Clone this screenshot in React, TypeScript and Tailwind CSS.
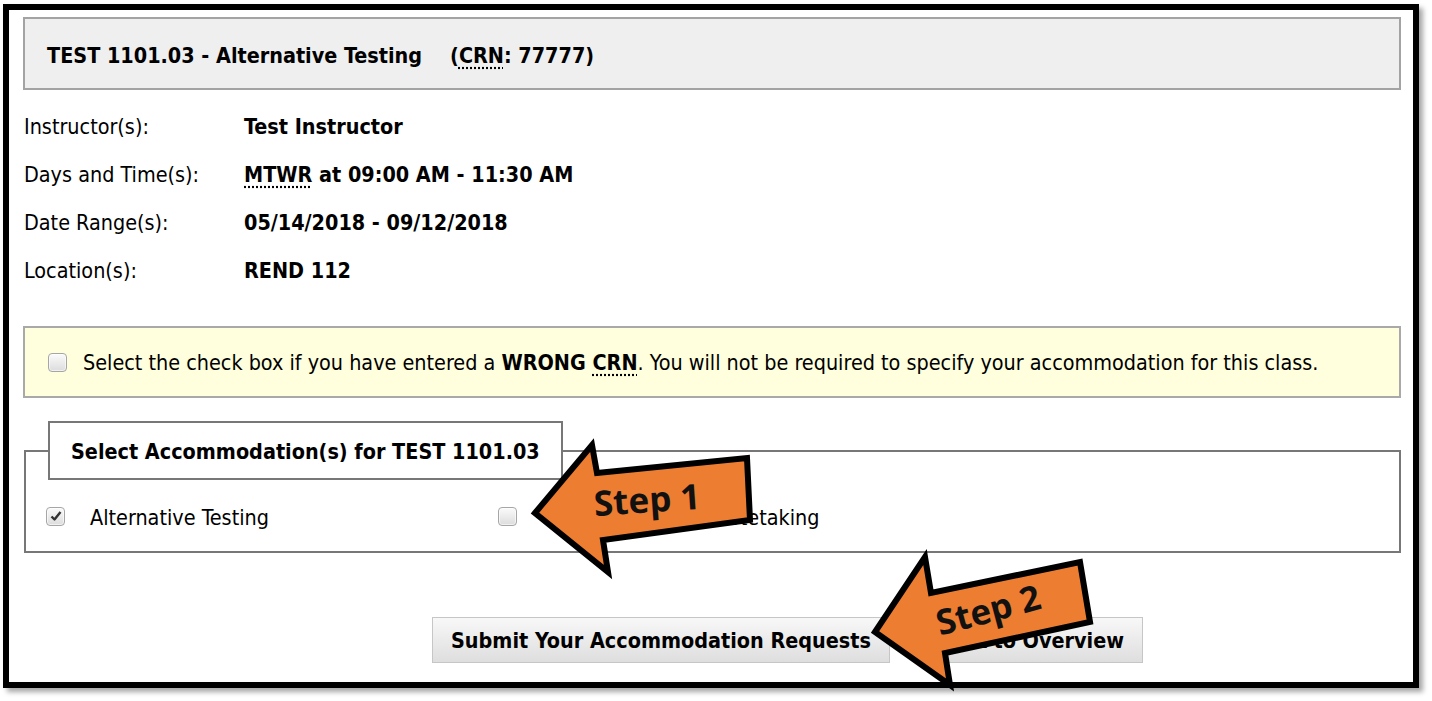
import React from "react";

const rows = [
  { label: "Instructor(s):", value: <>Test Instructor</> },
  {
    label: "Days and Time(s):",
    value: (
      <>
        <abbr className="underline decoration-dotted underline-offset-4">MTWR</abbr> at 09:00 AM - 11:30 AM
      </>
    ),
  },
  { label: "Date Range(s):", value: <>05/14/2018 - 09/12/2018</> },
  { label: "Location(s):", value: <>REND 112</> },
];

function Checkbox({ checked = false }: { checked?: boolean }) {
  return (
    <span className="flex h-[19px] w-[19px] shrink-0 items-center justify-center rounded-[4px] border border-[#a6a6a6] bg-gradient-to-b from-[#fbfbfb] to-[#dcdcdc] shadow-[inset_0_0_0_1px_rgba(255,255,255,0.6)]">
      {checked && (
        <svg width="12" height="12" viewBox="0 0 12 12">
          <path d="M1.5 6.5 L4.5 9.5 L10.5 2" fill="none" stroke="#333" strokeWidth="2.4" strokeLinejoin="round" />
        </svg>
      )}
    </span>
  );
}

export default function App() {
  return (
    <div className="relative h-[701px] w-[1432px] overflow-hidden bg-white font-['DejaVu_Sans_Condensed','DejaVu_Sans',sans-serif] text-[21.4px] text-black">
      <div className="pl-[3px] pt-[4px]">
        <div className="h-[684px] w-[1416px] border-[6px] border-black bg-white pl-[14px] pr-[12px] pt-[7px] shadow-[4px_4px_5px_rgba(0,0,0,0.35)]">
          {/* Course header */}
          <div className="flex h-[73px] items-center border-2 border-[#a3a3a3] bg-[#efefef] pl-[22px] pt-[5px] font-bold">
            <span>TEST 1101.03 - Alternative Testing</span>
            <span className="ml-[28px]">
              (<abbr className="underline decoration-dotted underline-offset-4">CRN</abbr>: 77777)
            </span>
          </div>

          {/* Details */}
          <div className="mt-[13px]">
            {rows.map((r) => (
              <div key={r.label} className="flex h-[48px] items-center pl-[1px] pt-[1px]">
                <span className="w-[220px]">{r.label}</span>
                <span className="font-bold">{r.value}</span>
              </div>
            ))}
          </div>

          {/* Wrong CRN notice */}
          <div className="mt-[31px] flex h-[72px] items-center gap-[16px] border-2 border-[#a9a9a9] bg-[#ffffde] pl-[23px]">
            <Checkbox />
            <span className="pt-[3px]">
              Select the check box if you have entered a <b>WRONG <abbr className="underline decoration-dotted underline-offset-4">CRN</abbr></b>. You will not be required to specify your accommodation for this class.
            </span>
          </div>

          {/* Accommodations */}
          <fieldset className="ml-[1px] mt-[23px] border-2 border-[#777] px-[22px]">
            <legend className="h-[59px] border-2 border-[#777] bg-white px-[21px] font-bold leading-[57px]">
              Select Accommodation(s) for TEST 1101.03
            </legend>
            <div className="-ml-[2px] mb-[35px] mt-[18px] grid h-[18px] grid-cols-[452px_1fr] items-center">
              <label className="flex items-center gap-[25px]">
                <Checkbox checked />
                <span className="pt-[4px]">Alternative Testing</span>
              </label>
              <label className="flex items-center gap-[25px]">
                <Checkbox />
                <span className="pt-[4px]">Use of Laptop for Notetaking</span>
              </label>
            </div>
          </fieldset>

          {/* Actions */}
          <div className="mt-[64px] flex gap-[26px] pl-[409px] font-bold">
            <button className="h-[46px] border border-[#c6c6c6] bg-gradient-to-b from-[#f8f8f8] to-[#dedede] px-[18px] pt-[2px]">
              Submit Your Accommodation Requests
            </button>
            <button className="h-[46px] border border-[#c6c6c6] bg-gradient-to-b from-[#f8f8f8] to-[#dedede] px-[18px] pt-[2px]">
              Back to Overview
            </button>
          </div>
        </div>
      </div>

      {/* Callout arrows */}
      <svg className="pointer-events-none absolute inset-0" width="1432" height="701" viewBox="0 0 1432 701">
        <polygon
          points="535,513 592,445 597,473 747,458 750,520 603,540 608,572"
          fill="#ed7d31"
          stroke="#000"
          strokeWidth="6"
          strokeLinejoin="miter"
        />
        <text
          x="647"
          y="499"
          textAnchor="middle"
          dominantBaseline="central"
          transform="rotate(-4 647 499)"
          fontFamily="'Open Sans', 'Noto Sans', sans-serif"
          fontWeight="700"
          fontSize="35"
          fill="#111"
        >
          Step 1
        </text>
        <polygon
          points="875,632 925,557 931,593 1080,562 1090,622 945,653 950,685"
          fill="#ed7d31"
          stroke="#000"
          strokeWidth="6"
          strokeLinejoin="miter"
        />
        <text
          x="988"
          y="609"
          textAnchor="middle"
          dominantBaseline="central"
          transform="rotate(-15 988 609)"
          fontFamily="'Open Sans', 'Noto Sans', sans-serif"
          fontWeight="700"
          fontSize="35"
          fill="#111"
        >
          Step 2
        </text>
      </svg>
    </div>
  );
}
